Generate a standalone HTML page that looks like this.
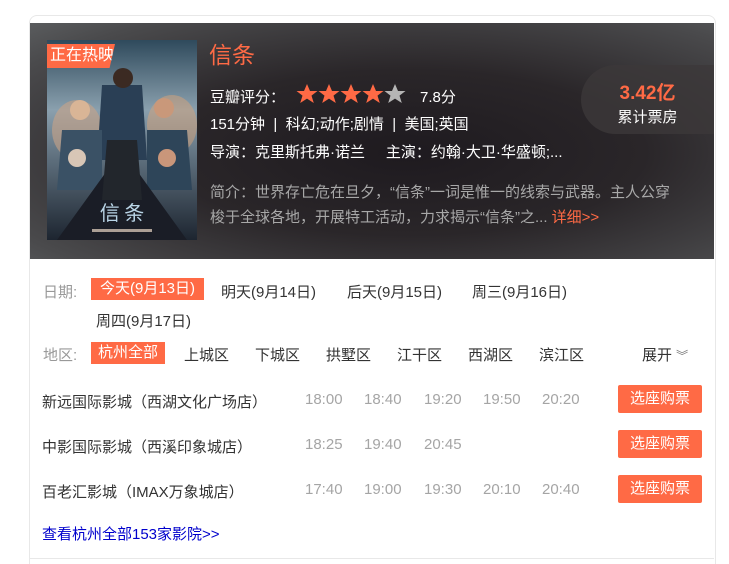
<!DOCTYPE html>
<html style="overflow:hidden;height:564px"><head><meta charset="utf-8"><style>
*{margin:0;padding:0;box-sizing:border-box}
body{width:729px;height:564px;background:#fff;font-family:"Liberation Sans","Noto Sans CJK SC",sans-serif;position:relative;overflow:hidden;color:#333}
.card{position:absolute;left:29px;top:15px;width:687px;height:549px;border:1px solid #e8e8e8;border-bottom:none;border-radius:8px 8px 0 0}
.hd{position:absolute;left:30px;top:23px;width:684px;height:236px;background:radial-gradient(ellipse at 55% 55%,#1e1a1f 0%,#2a2629 45%,#4a4a4c 85%,#5a5c5e 100%);overflow:hidden}
.a{position:absolute;white-space:nowrap}
.w{color:#fff;font-size:15px}
.g{color:#a8a8a8;font-size:15px}
.chip{position:absolute;background:#ff6a45;color:#fff;height:22px;line-height:22px;font-size:15px;text-align:center}
.t{color:#a5a5a5;font-size:15px}
.btn{position:absolute;left:618px;width:84px;height:28px;background:#ff6a45;border-radius:2px;color:#fff;font-size:15px;text-align:center;line-height:28px}
.lbl{color:#999;font-size:15px}
.d{font-size:15px;color:#333}
</style></head><body>
<div class="card"></div>
<div style="position:absolute;left:30px;top:558px;width:684px;height:1px;background:#e8e8e8"></div>
<div class="hd"></div>
<svg class="a" style="left:47px;top:40px" width="150" height="200" viewBox="0 0 150 200">
<defs><linearGradient id="bg" x1="0" y1="0" x2="0" y2="1"><stop offset="0" stop-color="#2f4a5c"/><stop offset=".35" stop-color="#8aa0ae"/><stop offset=".6" stop-color="#5d6e7c"/><stop offset="1" stop-color="#1d2530"/></linearGradient></defs>
<rect width="150" height="200" fill="url(#bg)"/>
<ellipse cx="30" cy="90" rx="25" ry="30" fill="#c9a487" opacity=".6"/>
<ellipse cx="125" cy="85" rx="25" ry="30" fill="#d8a379" opacity=".5"/>
<path d="M55 45 L95 45 L100 120 L50 120Z" fill="#2a3f55"/>
<circle cx="76" cy="38" r="10" fill="#3b2a22"/>
<circle cx="33" cy="70" r="10" fill="#d9b596"/>
<circle cx="117" cy="68" r="10" fill="#c9987a"/>
<path d="M15 90 L55 90 L55 150 L10 150Z" fill="#3a5165"/>
<path d="M100 90 L140 90 L145 150 L100 150Z" fill="#2e4559"/>
<circle cx="30" cy="118" r="9" fill="#d8c6b6"/>
<circle cx="120" cy="118" r="9" fill="#c9967a"/>
<path d="M75 110 L140 200 L10 200Z" fill="#1a1d26"/>
<path d="M60 100 L90 100 L95 160 L55 160Z" fill="#22262c"/>
<text x="75" y="180" text-anchor="middle" font-size="20" fill="#b9d4e6" font-family="Noto Sans CJK SC">信 条</text>
<rect x="45" y="189" width="60" height="3" fill="#e9d7c4" opacity=".7"/>
</svg>
<div class="a" style="left:47px;top:44px;width:68px;height:24px;background:#ff6a45;clip-path:polygon(0 0,100% 0,92% 100%,0 100%);color:#fff;font-size:16px;line-height:24px;padding-left:3px">正在热映</div>
<div class="a" style="left:209px;top:36px;color:#ff6a45;font-size:23px">信条</div>
<div class="a w" style="left:210px;top:86px">豆瓣评分：</div>
<svg class="a" style="left:296px;top:83px" width="112" height="22" viewBox="0 0 112 22">
<g fill="#ff6a45"><path id="s" d="M11 1l3 7h7.5l-6 4.6 2.3 7.4L11 15.6 4.2 20l2.3-7.4L0.5 8H8z"/><use href="#s" x="22"/><use href="#s" x="44"/><use href="#s" x="66"/></g>
<use href="#s" x="88" fill="#b5b5b5"/>
</svg>
<div class="a w" style="left:420px;top:86px">7.8分</div>
<div class="a w" style="left:210px;top:113px">151分钟 &nbsp;| &nbsp;科幻;动作;剧情 &nbsp;| &nbsp;美国;英国</div>
<div class="a w" style="left:210px;top:141px">导演：克里斯托弗·诺兰 &nbsp;&nbsp;&nbsp;&nbsp;主演：约翰·大卫·华盛顿;...</div>
<div class="a g" style="left:210px;top:181px">简介：世界存亡危在旦夕，“信条”一词是惟一的线索与武器。主人公穿</div>
<div class="a g" style="left:210px;top:206px">梭于全球各地，开展特工活动，力求揭示“信条”之... <span style="color:#ff6a45">详细&gt;&gt;</span></div>
<div class="a" style="left:581px;top:65px;width:133px;height:69px;background:rgba(60,56,57,.8);border-radius:35px 0 0 35px"></div>
<div class="a" style="left:581px;top:78px;width:133px;text-align:center;color:#ff6a45;font-size:19px;font-weight:bold">3.42亿</div>
<div class="a" style="left:581px;top:106px;width:133px;text-align:center;color:#fff;font-size:15px">累计票房</div>

<div class="a lbl" style="left:43px;top:281px">日期:</div>
<div class="chip" style="left:91px;top:278px;width:113px">今天(9月13日)</div>
<div class="a d" style="left:221px;top:281px">明天(9月14日)</div>
<div class="a d" style="left:347px;top:281px">后天(9月15日)</div>
<div class="a d" style="left:472px;top:281px">周三(9月16日)</div>
<div class="a d" style="left:96px;top:310px">周四(9月17日)</div>
<div class="a lbl" style="left:43px;top:344px">地区:</div>
<div class="chip" style="left:91px;top:342px;width:74px">杭州全部</div>
<div class="a d" style="left:184px;top:344px">上城区</div>
<div class="a d" style="left:255px;top:344px">下城区</div>
<div class="a d" style="left:326px;top:344px">拱墅区</div>
<div class="a d" style="left:397px;top:344px">江干区</div>
<div class="a d" style="left:468px;top:344px">西湖区</div>
<div class="a d" style="left:539px;top:344px">滨江区</div>
<div class="a d" style="left:642px;top:344px">展开 <span style="color:#777;font-size:12px">︾</span></div>

<div class="a d" style="left:42px;top:391px">新远国际影城（西湖文化广场店）</div>
<div class="a t" style="left:305px;top:391px">18:00</div><div class="a t" style="left:364px;top:391px">18:40</div><div class="a t" style="left:424px;top:391px">19:20</div><div class="a t" style="left:483px;top:391px">19:50</div><div class="a t" style="left:542px;top:391px">20:20</div>
<div class="btn" style="top:385px">选座购票</div>
<div class="a d" style="left:42px;top:436px">中影国际影城（西溪印象城店）</div>
<div class="a t" style="left:305px;top:436px">18:25</div><div class="a t" style="left:364px;top:436px">19:40</div><div class="a t" style="left:424px;top:436px">20:45</div>
<div class="btn" style="top:430px">选座购票</div>
<div class="a d" style="left:42px;top:481px">百老汇影城（IMAX万象城店）</div>
<div class="a t" style="left:305px;top:481px">17:40</div><div class="a t" style="left:364px;top:481px">19:00</div><div class="a t" style="left:424px;top:481px">19:30</div><div class="a t" style="left:483px;top:481px">20:10</div><div class="a t" style="left:542px;top:481px">20:40</div>
<div class="btn" style="top:475px">选座购票</div>
<div class="a" style="left:42px;top:523px;color:#0000cc;font-size:15px">查看杭州全部153家影院&gt;&gt;</div>
</body></html>
